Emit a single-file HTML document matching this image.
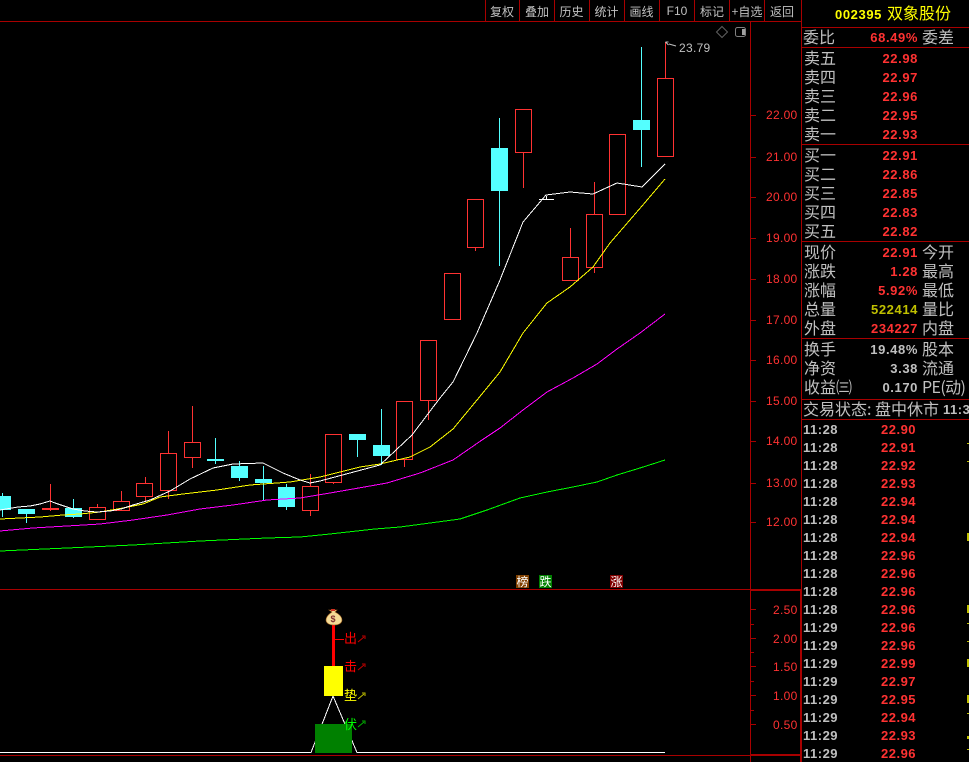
<!DOCTYPE html>
<html><head><meta charset="utf-8"><style>
html,body{margin:0;padding:0;background:#000;width:969px;height:762px;overflow:hidden}
svg{display:block}
text{font-family:"Liberation Sans","WenQuanYi Zen Hei","Noto Sans CJK SC",sans-serif}
.c{font-family:"WenQuanYi Zen Hei","Noto Sans CJK SC",sans-serif;font-size:16px;fill:#c0c0c0}
.b{font-family:"WenQuanYi Zen Hei","Noto Sans CJK SC",sans-serif;font-size:12px;fill:#c0c0c0;text-anchor:middle}
.n{font-weight:bold;font-size:13px;letter-spacing:.6px;text-anchor:end;fill:#ff3232}
.g{fill:#c0c0c0}
.a{font-size:12px;letter-spacing:.3px;fill:#ff3232}
.t{font-weight:bold;font-size:13px;letter-spacing:.5px;fill:#c0c0c0}
.p{font-weight:bold;font-size:13px;letter-spacing:.5px;fill:#ff3232}
.k{font-family:"WenQuanYi Zen Hei","Noto Sans CJK SC",sans-serif;font-size:12px;fill:#fff;text-anchor:middle}
</style></head><body>
<svg width="969" height="762" viewBox="0 0 969 762" xmlns="http://www.w3.org/2000/svg">
<rect width="969" height="762" fill="#000"/>
<g shape-rendering="crispEdges">
<!-- candle hollow -->
<g fill="none" stroke="#ff3232">
<path d="M97.5 504V507M121.5 491V501M145.5 477V483M145.5 497V501M168.5 431V453M168.5 491V499M192.5 406V442M192.5 458V468M310.5 474V486M310.5 511V516M333.5 483V484M404.5 460V467M428.5 401V420M475.5 248V251M523.5 153V188M570.5 228V257M594.5 182V214M594.5 267V273M665.5 42V78"/>
<rect x="89.5" y="507.5" width="16" height="12"/><rect x="113.5" y="501.5" width="16" height="9"/><rect x="136.5" y="483.5" width="16" height="13"/><rect x="160.5" y="453.5" width="16" height="37"/><rect x="184.5" y="442.5" width="16" height="15"/><rect x="302.5" y="486.5" width="16" height="24"/><rect x="325.5" y="434.5" width="16" height="48"/><rect x="396.5" y="401.5" width="16" height="58"/><rect x="420.5" y="340.5" width="16" height="60"/><rect x="444.5" y="273.5" width="16" height="46"/><rect x="467.5" y="199.5" width="16" height="48"/><rect x="515.5" y="109.5" width="16" height="43"/><rect x="562.5" y="257.5" width="16" height="23"/><rect x="586.5" y="214.5" width="16" height="53"/><rect x="609.5" y="134.5" width="16" height="80"/><rect x="657.5" y="78.5" width="16" height="78"/>
</g>
<path d="M50.5 484V511" stroke="#ff3232" fill="none"/><rect x="42" y="508" width="17" height="2" fill="#ff3232"/>
<!-- cyan -->
<g fill="#54ffff">
<rect x="2" y="493" width="1" height="24"/><rect x="-6" y="496" width="17" height="14"/>
<rect x="26" y="509" width="1" height="14"/><rect x="18" y="509" width="17" height="5"/>
<rect x="73" y="499" width="1" height="19"/><rect x="65" y="508" width="17" height="9"/>
<rect x="215" y="438" width="1" height="26"/><rect x="207" y="459" width="17" height="2"/>
<rect x="239" y="461" width="1" height="20"/><rect x="231" y="466" width="17" height="12"/>
<rect x="263" y="466" width="1" height="34"/><rect x="255" y="479" width="17" height="4"/>
<rect x="286" y="484" width="1" height="26"/><rect x="278" y="487" width="17" height="20"/>
<rect x="357" y="434" width="1" height="23"/><rect x="349" y="434" width="17" height="6"/>
<rect x="381" y="409" width="1" height="56"/><rect x="373" y="445" width="17" height="11"/>
<rect x="499" y="118" width="1" height="148"/><rect x="491" y="148" width="17" height="43"/>
<rect x="641" y="47" width="1" height="120"/><rect x="633" y="120" width="17" height="10"/>
</g>
<path d="M539 199.5H554M546.5 196V199" stroke="#fff" fill="none"/>
<!-- MA lines -->
<g fill="none" stroke-width="1">
<polyline stroke="#00ff00" points="0,551 67,548 133,545 200,541 267,538 300,537 330,534 375,529 400,527 430,523 460,519 487,510 520,498 547,492 573,487 597,482 617,475 640,468 665,460"/>
<polyline stroke="#ff00ff" points="0,531 33,528 67,526 100,524 133,520 167,515 200,509 233,505 267,500 300,498 330,493 353,489 387,483 420,473 453,460 482,440 500,428 523,410 547,392 573,378 597,364 617,349 640,333 665,314"/>
<polyline stroke="#ffff00" points="0,519 40,517 63,515 80,514 100,512 123,508 143,504 160,497 183,494 217,490 250,485 290,482 320,477 360,467 380,464 410,457 430,447 453,429 477,400 500,372 523,333 547,303 570,287 593,267 610,243 642,206 665,179"/>
<polyline stroke="#ffffff" points="0,510 18,507 30,506 40,504 50,501 55,503 73,509 85,511 97,512 110,511 121,509 133,505 150,500 170,491 190,479 213,468 233,464 263,463 283,473 300,480 310,483 320,481 380,465 412,435 440,398 453,382 477,333 500,280 523,222 546,195 570,192 593,194 617,183 642,187 665,164"/>
</g>
<!-- frame -->
<g fill="#a80000">
<rect x="0" y="21" width="801" height="1"/>
<rect x="750" y="22" width="1" height="740"/>
<rect x="801" y="0" width="1" height="590"/>
<rect x="800" y="589" width="2" height="173"/>
<rect x="0" y="589" width="750" height="1"/>
<rect x="750" y="589" width="50" height="2"/>
<rect x="0" y="755" width="750" height="1"/>
<rect x="750" y="754" width="50" height="2"/>
<rect x="802" y="27" width="167" height="1"/><rect x="802" y="47" width="167" height="1"/><rect x="802" y="144" width="167" height="1"/><rect x="802" y="241" width="167" height="1"/><rect x="802" y="338" width="167" height="1"/><rect x="802" y="399" width="167" height="1"/><rect x="802" y="419" width="167" height="1"/>
<rect x="485" y="0" width="1" height="21"/><rect x="519" y="0" width="1" height="21"/><rect x="554" y="0" width="1" height="21"/><rect x="589" y="0" width="1" height="21"/><rect x="624" y="0" width="1" height="21"/><rect x="659" y="0" width="1" height="21"/><rect x="694" y="0" width="1" height="21"/><rect x="729" y="0" width="1" height="21"/><rect x="764" y="0" width="1" height="21"/>
<!-- axis ticks -->
<rect x="751" y="115" width="5" height="1"/><rect x="751" y="157" width="5" height="1"/><rect x="751" y="197" width="5" height="1"/><rect x="751" y="238" width="5" height="1"/><rect x="751" y="279" width="5" height="1"/><rect x="751" y="320" width="5" height="1"/><rect x="751" y="360" width="5" height="1"/><rect x="751" y="401" width="5" height="1"/><rect x="751" y="441" width="5" height="1"/><rect x="751" y="483" width="5" height="1"/><rect x="751" y="522" width="5" height="1"/>
<rect x="751" y="609" width="5" height="1"/><rect x="751" y="624" width="3" height="1"/><rect x="751" y="638" width="5" height="1"/><rect x="751" y="652" width="3" height="1"/><rect x="751" y="666" width="5" height="1"/><rect x="751" y="681" width="3" height="1"/><rect x="751" y="695" width="5" height="1"/><rect x="751" y="710" width="3" height="1"/><rect x="751" y="724" width="5" height="1"/>
</g>
<!-- yellow tick marks -->
<g fill="#c0c000">
<rect x="967" y="443" width="2" height="1"/><rect x="967" y="461" width="2" height="1"/><rect x="967" y="533" width="2" height="8"/><rect x="967" y="605" width="2" height="8"/><rect x="967" y="623" width="2" height="1"/><rect x="967" y="641" width="2" height="1"/><rect x="967" y="659" width="2" height="8"/><rect x="967" y="695" width="2" height="8"/><rect x="967" y="713" width="2" height="1"/><rect x="967" y="736" width="2" height="3"/><rect x="967" y="749" width="2" height="1"/>
</g>
<!-- badges -->
<rect x="516" y="575" width="13" height="13" fill="#804000"/><rect x="539" y="575" width="13" height="13" fill="#008000"/><rect x="610" y="575" width="13" height="13" fill="#800000"/>
<!-- sub indicator -->
<polyline fill="none" stroke="#fff" points="0,752.5 311,752.5 333,696 357,752.5 665,752.5"/>
<rect x="315" y="724" width="37" height="29" fill="#008000"/>
<rect x="332" y="625" width="3" height="41" fill="#ff0000"/>
<rect x="324" y="666" width="19" height="30" fill="#ffff00"/>
<rect x="335" y="639" width="9" height="1" fill="#ff0000"/>
</g>
<!-- money bag -->
<path d="M329 610h8l-2 2c4 2 7 5 7 8 0 3-3 5-8 5s-8-2-8-5c0-3 3-6 6-8z" fill="#f5dc96" stroke="#a06020" stroke-width=".6"/>
<rect x="331" y="609" width="4" height="2" fill="#d03020"/>
<text x="333" y="622" font-size="9" font-weight="bold" text-anchor="middle" fill="#803030">$</text>
<!-- sub labels -->
<text class="c" x="344" y="643" style="font-size:13px;fill:#ff0000">出</text>
<text class="c" x="344" y="671" style="font-size:13px;fill:#ff0000">击</text>
<text class="c" x="344" y="700" style="font-size:13px;fill:#ffff00">垫</text>
<text class="c" x="344" y="729" style="font-size:13px;fill:#00ff00">伏</text>
<g fill="none" stroke-width="1">
<path d="M358 642l6-5M362 636h3v3" stroke="#c00000"/>
<path d="M358 670l6-5M362 664h3v3" stroke="#c00000"/>
<path d="M358 699l6-5M362 693h3v3" stroke="#c0c000"/>
<path d="M358 727l6-5M362 721h3v3" stroke="#00b000"/>
</g>
<text class="k" x="522.500" y="586">榜</text><text class="k" x="545.500" y="586">跌</text><text class="k" x="616.500" y="586">涨</text>
<!-- top icons -->
<path d="M722 26.500l5.500 5.500-5.500 5.500-5.500-5.500z" fill="none" stroke="#606060"/>
<rect x="735.500" y="27.500" width="10" height="9" rx="2" fill="none" stroke="#808080"/>
<rect x="742" y="29" width="3" height="6" fill="#a0a0a0"/>
<!-- high flag -->
<path d="M665.500 42h3M665.500 42l3 3M669 44l7 2" stroke="#c0c0c0" fill="none"/>
<text x="679" y="52" font-size="12" letter-spacing=".3" fill="#c0c0c0">23.79</text>
<!-- toolbar -->
<text class="b" x="502" y="16">复权</text><text class="b" x="537" y="16">叠加</text><text class="b" x="571.500" y="16">历史</text><text class="b" x="606.500" y="16">统计</text><text class="b" x="641.500" y="16">画线</text><text class="b" x="677" y="15" style="font-family:'Liberation Sans'">F10</text><text class="b" x="712" y="16">标记</text><text class="b" x="747" y="16">+自选</text><text class="b" x="782" y="16">返回</text>
<!-- axis labels -->
<text class="a" x="766" y="119">22.00</text><text class="a" x="766" y="161">21.00</text><text class="a" x="766" y="201">20.00</text><text class="a" x="766" y="242">19.00</text><text class="a" x="766" y="283">18.00</text><text class="a" x="766" y="324">17.00</text><text class="a" x="766" y="364">16.00</text><text class="a" x="766" y="405">15.00</text><text class="a" x="766" y="445">14.00</text><text class="a" x="766" y="487">13.00</text><text class="a" x="766" y="526">12.00</text>
<text class="a" x="773" y="614">2.50</text><text class="a" x="773" y="643">2.00</text><text class="a" x="773" y="671">1.50</text><text class="a" x="773" y="700">1.00</text><text class="a" x="773" y="729">0.50</text>
<!-- header -->
<text x="835" y="19" font-size="13" font-weight="bold" letter-spacing=".6" fill="#ffff00">002395</text>
<text class="c" x="887" y="19" style="fill:#ffff00">双象股份</text>
<text class="c" x="803" y="43">委比</text><text class="n" x="918" y="42">68.49%</text><text class="c" x="922" y="43">委差</text>
<text class="c" x="804" y="64">卖五</text><text class="n" x="918" y="63">22.98</text>
<text class="c" x="804" y="83">卖四</text><text class="n" x="918" y="82">22.97</text>
<text class="c" x="804" y="102">卖三</text><text class="n" x="918" y="101">22.96</text>
<text class="c" x="804" y="121">卖二</text><text class="n" x="918" y="120">22.95</text>
<text class="c" x="804" y="140">卖一</text><text class="n" x="918" y="139">22.93</text>
<text class="c" x="804" y="161">买一</text><text class="n" x="918" y="160">22.91</text>
<text class="c" x="804" y="180">买二</text><text class="n" x="918" y="179">22.86</text>
<text class="c" x="804" y="199">买三</text><text class="n" x="918" y="198">22.85</text>
<text class="c" x="804" y="218">买四</text><text class="n" x="918" y="217">22.83</text>
<text class="c" x="804" y="237">买五</text><text class="n" x="918" y="236">22.82</text>
<text class="c" x="804" y="258">现价</text><text class="n" x="918" y="257">22.91</text><text class="c" x="922" y="258">今开</text>
<text class="c" x="804" y="277">涨跌</text><text class="n" x="918" y="276">1.28</text><text class="c" x="922" y="277">最高</text>
<text class="c" x="804" y="296">涨幅</text><text class="n" x="918" y="295">5.92%</text><text class="c" x="922" y="296">最低</text>
<text class="c" x="804" y="315">总量</text><text class="n" x="918" y="314" style="fill:#c0c000">522414</text><text class="c" x="922" y="315">量比</text>
<text class="c" x="804" y="334">外盘</text><text class="n" x="918" y="333">234227</text><text class="c" x="922" y="334">内盘</text>
<text class="c" x="804" y="355">换手</text><text class="n g" x="918" y="354" style="fill:#c0c0c0">19.48%</text><text class="c" x="922" y="355">股本</text>
<text class="c" x="804" y="374">净资</text><text class="n g" x="918" y="373" style="fill:#c0c0c0">3.38</text><text class="c" x="922" y="374">流通</text>
<text class="c" x="804" y="393">收益㈢</text><text class="n g" x="918" y="392" style="fill:#c0c0c0">0.170</text><text class="c" x="922" y="393" style="letter-spacing:-.6px">PE(动)</text>
<text class="c" x="803" y="415">交易状态:</text><text class="c" x="875" y="415">盘中休市</text><text x="943" y="414" font-size="13" font-weight="bold" letter-spacing=".5" fill="#c0c0c0">11:30</text>
<!-- ticks -->
<text class="t" x="803" y="434">11:28</text><text class="p" x="881" y="434">22.90</text>
<text class="t" x="803" y="452">11:28</text><text class="p" x="881" y="452">22.91</text>
<text class="t" x="803" y="470">11:28</text><text class="p" x="881" y="470">22.92</text>
<text class="t" x="803" y="488">11:28</text><text class="p" x="881" y="488">22.93</text>
<text class="t" x="803" y="506">11:28</text><text class="p" x="881" y="506">22.94</text>
<text class="t" x="803" y="524">11:28</text><text class="p" x="881" y="524">22.94</text>
<text class="t" x="803" y="542">11:28</text><text class="p" x="881" y="542">22.94</text>
<text class="t" x="803" y="560">11:28</text><text class="p" x="881" y="560">22.96</text>
<text class="t" x="803" y="578">11:28</text><text class="p" x="881" y="578">22.96</text>
<text class="t" x="803" y="596">11:28</text><text class="p" x="881" y="596">22.96</text>
<text class="t" x="803" y="614">11:28</text><text class="p" x="881" y="614">22.96</text>
<text class="t" x="803" y="632">11:29</text><text class="p" x="881" y="632">22.96</text>
<text class="t" x="803" y="650">11:29</text><text class="p" x="881" y="650">22.96</text>
<text class="t" x="803" y="668">11:29</text><text class="p" x="881" y="668">22.99</text>
<text class="t" x="803" y="686">11:29</text><text class="p" x="881" y="686">22.97</text>
<text class="t" x="803" y="704">11:29</text><text class="p" x="881" y="704">22.95</text>
<text class="t" x="803" y="722">11:29</text><text class="p" x="881" y="722">22.94</text>
<text class="t" x="803" y="740">11:29</text><text class="p" x="881" y="740">22.93</text>
<text class="t" x="803" y="758">11:29</text><text class="p" x="881" y="758">22.96</text>
</svg>
</body></html>
